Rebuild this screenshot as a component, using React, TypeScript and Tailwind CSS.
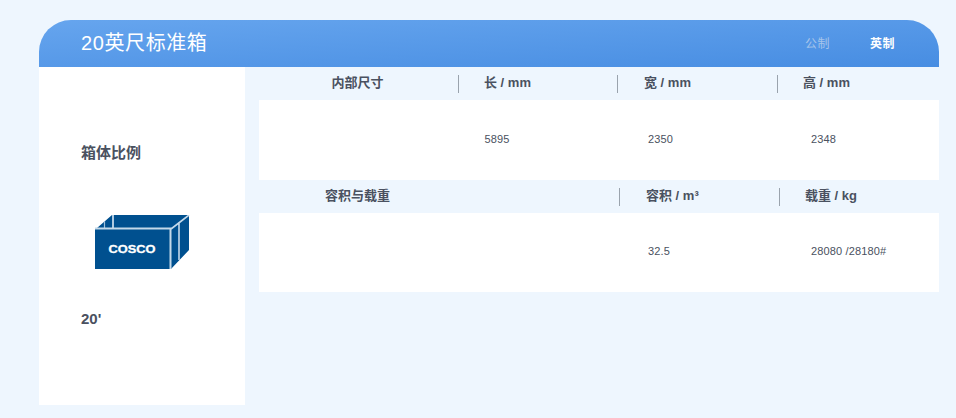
const FONT = "font-['Liberation_Sans','Noto_Sans_CJK_SC',sans-serif]";

function HeadCell({
  width,
  pad,
  children,
}: {
  width: string;
  pad: string;
  children: React.ReactNode;
}) {
  return (
    <div className={`${width} ${pad} flex h-[18px] items-center border-l border-[#9aa3ad]`}>
      <span className="mb-[2px] text-[13px] font-bold text-[#4a5160]">{children}</span>
    </div>
  );
}

function ContainerBox() {
  return (
    <svg width="96" height="56" viewBox="0 0 96 56" className="block">
      <polygon points="3,13 18,0 95,0 95,35 77,54 77,13" fill="#00508f" />
      <path d="M10.5 6 V13" fill="none" stroke="#9fc0da" strokeWidth="1.2" />
      <path d="M19 0 V13" fill="none" stroke="#c4d9ea" strokeWidth="1.8" />
      <path d="M77 14 L95 0 M85 7 V45" fill="none" stroke="#c4d9ea" strokeWidth="1.6" />
      <rect x="1" y="14" width="75" height="40" fill="#00508f" />
      <path d="M1 13.5 H76.5 V54" fill="none" stroke="#c4d9ea" strokeWidth="2" />
      <text x="38" y="38" textAnchor="middle" fontSize="10.5" fontWeight="700" fill="#ffffff" stroke="#ffffff" strokeWidth="0.3" fontFamily="'Liberation Sans', sans-serif" textLength="47" lengthAdjust="spacingAndGlyphs">COSCO</text>
    </svg>
  );
}

export default function App() {
  return (
    <div className={`${FONT} min-h-[418px] w-[956px] bg-[#eef6fe] pl-[39px] pt-5`}>
      <div className="w-[900px]">
        <div className="flex h-[47px] items-center justify-between rounded-t-[32px] bg-gradient-to-br from-[#66a5ee] to-[#478de2] pl-[42px] pr-[44px]">
          <h1 className="mb-[2px] text-[20px] font-normal tracking-[0.6px] text-white">20英尺标准箱</h1>
          <div className="flex gap-[40px] text-[12px] tracking-[0.5px]">
            <span className="font-normal text-[#a6c4ea]">公制</span>
            <span className="font-bold text-white">英制</span>
          </div>
        </div>

        <div className="flex">
          <aside className="flex h-[338px] w-[206px] flex-col bg-white pl-[42px]">
            <div className="mt-[76px] text-[15px] font-bold leading-5 text-[#4a5160]">箱体比例</div>
            <div className="mt-[52px] ml-[13px]">
              <ContainerBox />
            </div>
            <div className="mt-[38px] text-[15px] font-bold leading-5 text-[#4a5160]">20'</div>
          </aside>

          <main className="ml-[14px] w-[680px]">
            <div className="flex h-[33px] items-center">
              <div className="mb-[2px] flex w-[199px] justify-center pr-[2px]">
                <span className="text-[13px] font-bold text-[#4a5160]">内部尺寸</span>
              </div>
              <HeadCell width="w-[159px]" pad="pl-[25px]">长 / mm</HeadCell>
              <HeadCell width="w-[160px]" pad="pl-[26px]">宽 / mm</HeadCell>
              <HeadCell width="w-[162px]" pad="pl-[25px]">高 / mm</HeadCell>
            </div>
            <div className="flex h-[80px] items-center bg-white pb-[2px] text-[11px] tracking-[0.15px] text-[#4a5160]">
              <div className="w-[225.5px]" />
              <div className="w-[163.5px]">5895</div>
              <div className="w-[163px]">2350</div>
              <div>2348</div>
            </div>

            <div className="flex h-[33px] items-center">
              <div className="mb-[2px] flex w-[360px] justify-start pl-[66px]">
                <span className="text-[13px] font-bold text-[#4a5160]">容积与载重</span>
              </div>
              <HeadCell width="w-[160px]" pad="pl-[26px]">容积 / m³</HeadCell>
              <HeadCell width="w-[160px]" pad="pl-[25px]">载重 / kg</HeadCell>
            </div>
            <div className="flex h-[79px] items-center bg-white pb-[2px] text-[11px] tracking-[0.15px] text-[#4a5160]">
              <div className="w-[389px]" />
              <div className="w-[163px]">32.5</div>
              <div>28080 /28180#</div>
            </div>
          </main>
        </div>
      </div>
    </div>
  );
}
